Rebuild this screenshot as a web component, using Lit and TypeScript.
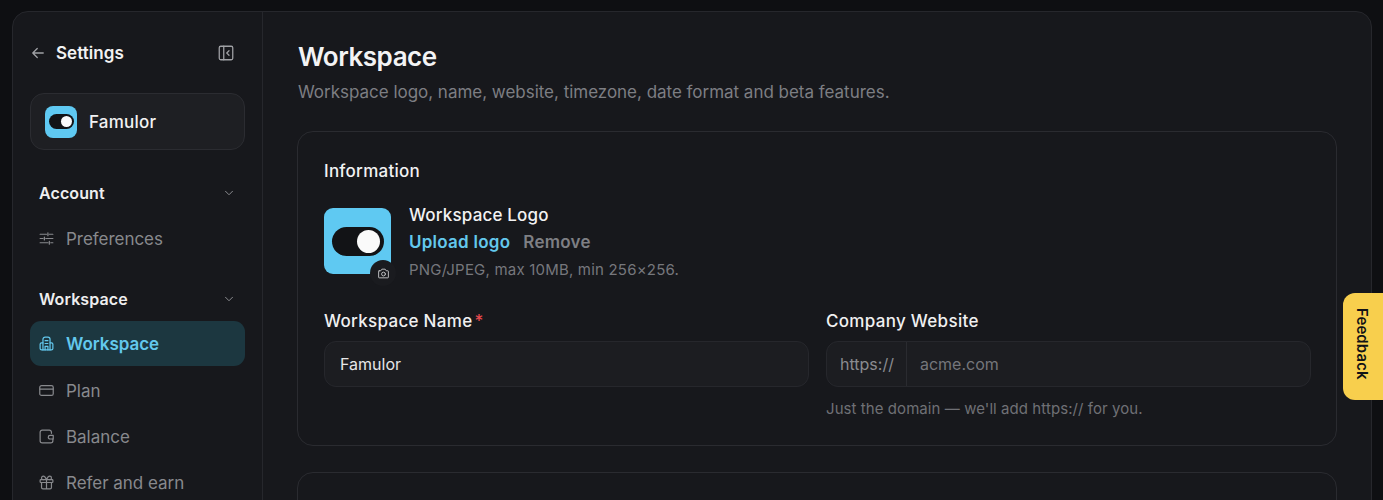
import { LitElement, html, css, svg } from "lit";
import { customElement } from "lit/decorators.js";

const ic = (body: unknown, size = 17) => html`<svg width=${size} height=${size} viewBox="0 0 24 24" fill="none" stroke="currentColor" stroke-width="1.7" stroke-linecap="round" stroke-linejoin="round">${body}</svg>`;

const sliders = svg`<path d="M3 6h9M16 6h5M3 12h4M11 12h10M3 18h11M18 18h3M14 4v4M9 10v4M16 16v4"/>`;
const building = svg`<path d="M7 21V6a3 3 0 0 1 3-3h4a3 3 0 0 1 3 3v15"/><path d="M7 11H5a2 2 0 0 0-2 2v6a2 2 0 0 0 2 2h14a2 2 0 0 0 2-2v-6a2 2 0 0 0-2-2h-2"/><path d="M10 8h4M10 12h4M10 21v-5h4v5"/>`;
const card = svg`<rect x="2.500" y="5" width="19" height="14" rx="2.500"/><path d="M2.500 10h19"/>`;
const wallet = svg`<path d="M19 7.500V6a3 3 0 0 0-3-3H6a3 3 0 0 0-3 3v12a3 3 0 0 0 3 3h12a3 3 0 0 0 3-3v-2.500"/><path d="M21.500 10.500H17a2.500 2.500 0 0 0 0 5h4.500z"/>`;
const gift = svg`<rect x="3" y="8" width="18" height="4" rx="1"/><path d="M12 8v13M19 12v7a2 2 0 0 1-2 2H7a2 2 0 0 1-2-2v-7"/><path d="M7.500 8a2.500 2.500 0 0 1 0-5C10 3 12 8 12 8s2-5 4.500-5a2.500 2.500 0 0 1 0 5"/>`;

@customElement("app-root")
export class AppRoot extends LitElement {
  static styles = css`
    :host { display: block; height: 500px; overflow: hidden; position: relative; background: #0e0f12; font-family: Inter, "Liberation Sans", sans-serif; color: #f2f2f3; }
    .panel { display: flex; margin: 11px 11px 0 12px; height: 520px; background: #17181c; border: 1px solid #26272c; border-radius: 16px; box-sizing: border-box; overflow: hidden; }
    .side { width: 250px; flex: none; box-sizing: border-box; border-right: 1px solid #26272c; padding: 0 17px; }
    .head { display: flex; align-items: center; height: 20px; margin-top: 31px; margin-left: -1px; padding: 0 10px 0 0; gap: 9px; color: #a0a1a5; }
    .head b { flex: 1; font-size: 17px; font-weight: 600; color: #f2f2f3; letter-spacing: 0.05px; }
    .switch { display: flex; align-items: center; gap: 12px; height: 57px; box-sizing: border-box; margin-top: 30px; padding: 0 14px; border: 1px solid #2b2c31; border-radius: 14px; background: #1e1f23; font-size: 17px; font-weight: 500; letter-spacing: 0.2px; }
    .logo { background: #5fc9f2; display: grid; place-items: center; flex: none; }
    .logo.sm { width: 32px; height: 32px; border-radius: 8px; }
    .logo.lg { width: 67px; height: 66px; border-radius: 9px; }
    .pill { background: #121316; border-radius: 99px; display: flex; justify-content: flex-end; align-items: center; box-sizing: border-box; }
    .sm .pill { width: 25px; height: 15px; padding-right: 2px; }
    .lg .pill { width: 52px; height: 29px; padding-right: 4px; }
    .dot { background: #fafafa; border-radius: 50%; }
    .sm .dot { width: 11px; height: 11px; }
    .lg .dot { width: 23px; height: 23px; }
    .group { display: flex; justify-content: space-between; align-items: center; height: 20px; padding: 0 9px 0 9px; font-size: 16px; font-weight: 600; color: #eeeeef; letter-spacing: 0.1px; }
    .group svg { color: #8b8c90; }
    .g1 { margin-top: 33px; }
    .g2 { margin-top: 28px; }
    .item { display: flex; align-items: center; gap: 11px; height: 45px; margin-top: 1px; padding-left: 8px; border-radius: 11px; font-size: 17px; letter-spacing: -0.03px; color: #88898d; }
    .item.active { background: #1c3740; color: #63c8ed; font-weight: 600; margin-top: 12px; margin-bottom: 1px; }
    .item svg { flex: none; }
    .items { display: flex; flex-direction: column; }
    .pref { margin-top: 13px; }
    .main { flex: 1; min-width: 0; padding: 29px 34px 0 34px; }
    h1 { margin: 0 0 0 1px; font-size: 26px; line-height: 32px; font-weight: 600; letter-spacing: -0.45px; color: #f3f3f4; }
    .sub { margin: 7px 0 0 1px; font-size: 17px; line-height: 24px; color: #7d7e83; letter-spacing: -0.02px; }
    .cardbox { margin-top: 27px; height: 315px; box-sizing: border-box; border: 1px solid #2a2b30; border-radius: 16px; padding: 29px 26px 0; }
    .next { height: 80px; margin-top: 26px; box-sizing: border-box; border: 1px solid #2a2b30; border-radius: 16px; }
    h2 { margin: 0; font-size: 17px; line-height: 20px; font-weight: 500; letter-spacing: 0.25px; }
    .info { display: flex; gap: 18px; margin-top: 27px; }
    .avatar { position: relative; flex: none; }
    .cam { position: absolute; right: -5px; bottom: -6px; width: 26px; height: 26px; border-radius: 50%; background: #1a1b1f; color: #c5c6c9; display: grid; place-items: center; }
    .meta { margin-top: -3px; }
    .meta .t { font-size: 17px; line-height: 20px; font-weight: 500; letter-spacing: 0.17px; }
    .links { display: flex; gap: 13px; margin-top: 7px; font-size: 17px; line-height: 20px; font-weight: 600; letter-spacing: 0.25px; color: #7e7f84; }
    .links .up { color: #63c8ed; }
    .hint { font-size: 15px; line-height: 20px; color: #76777c; margin-top: 8px; letter-spacing: 0.2px; }
    .fields { display: grid; grid-template-columns: 485px 485px; gap: 17px; margin-top: 31px; }
    label { display: block; font-size: 17px; line-height: 20px; font-weight: 500; letter-spacing: 0.3px; color: #f0f0f1; }
    label i { color: #e5484d; font-style: normal; margin-left: 2px; }
    .inp { display: flex; align-items: center; height: 46px; margin-top: 10px; box-sizing: border-box; border: 1px solid #26272c; border-radius: 12px; background: #1c1d21; font-size: 16px; overflow: hidden; }
    .inp .v { padding-left: 15px; color: #e6e6e7; }
    .inp .pre { height: 100%; display: flex; align-items: center; padding: 0 12px 0 13px; border-right: 1px solid #2a2b30; color: #8a8b90; }
    .inp .ph { padding-left: 13px; color: #75767b; }
    .help { font-size: 15px; line-height: 20px; color: #6f7075; margin-top: 12px; letter-spacing: 0.07px; }
    .fb { position: absolute; right: 0; top: 293px; width: 40px; height: 107px; box-sizing: border-box; padding: 0 1px 6px 0; background: #f8cf4d; border-radius: 12px 0 0 12px; display: grid; place-items: center; color: #111216; }
    .fb span { writing-mode: vertical-rl; font-size: 15px; font-weight: 600; letter-spacing: 0.1px; }
  `;

  private logo(size: "sm" | "lg") {
    return html`<div class="logo ${size}"><div class="pill"><div class="dot"></div></div></div>`;
  }

  render() {
    return html`
      <div class="panel">
        <aside class="side">
          <div class="head">
            ${ic(svg`<path d="M19 12H5M11 6l-6 6 6 6"/>`, 18)}
            <b>Settings</b>
            ${ic(svg`<rect x="3" y="3" width="18" height="18" rx="2"/><path d="M9 3v18M16 9l-3 3 3 3"/>`, 18)}
          </div>
          <div class="switch">${this.logo("sm")}<span>Famulor</span></div>
          <div class="group g1"><span>Account</span>${ic(svg`<path d="M6 9l6 6 6-6"/>`, 14)}</div>
          <div class="items">
            <div class="item pref">${ic(sliders)}<span>Preferences</span></div>
          </div>
          <div class="group g2"><span>Workspace</span>${ic(svg`<path d="M6 9l6 6 6-6"/>`, 14)}</div>
          <div class="items">
            <div class="item active">${ic(building)}<span>Workspace</span></div>
            <div class="item">${ic(card)}<span>Plan</span></div>
            <div class="item">${ic(wallet)}<span>Balance</span></div>
            <div class="item">${ic(gift)}<span>Refer and earn</span></div>
          </div>
        </aside>
        <main class="main">
          <h1>Workspace</h1>
          <p class="sub">Workspace logo, name, website, timezone, date format and beta features.</p>
          <section class="cardbox">
            <h2>Information</h2>
            <div class="info">
              <div class="avatar">
                ${this.logo("lg")}
                <div class="cam">${ic(svg`<path d="M4 7h3l2-3h6l2 3h3a1 1 0 0 1 1 1v11a1 1 0 0 1-1 1H4a1 1 0 0 1-1-1V8a1 1 0 0 1 1-1z"/><circle cx="12" cy="13" r="3.500"/>`, 13)}</div>
              </div>
              <div class="meta">
                <div class="t">Workspace Logo</div>
                <div class="links"><span class="up">Upload logo</span><span>Remove</span></div>
                <div class="hint">PNG/JPEG, max 10MB, min 256×256.</div>
              </div>
            </div>
            <div class="fields">
              <div>
                <label>Workspace Name<i>*</i></label>
                <div class="inp"><span class="v">Famulor</span></div>
              </div>
              <div>
                <label>Company Website</label>
                <div class="inp"><span class="pre">https://</span><span class="ph">acme.com</span></div>
                <div class="help">Just the domain — we'll add https:// for you.</div>
              </div>
            </div>
          </section>
          <section class="next"></section>
        </main>
      </div>
      <div class="fb"><span>Feedback</span></div>
    `;
  }
}
